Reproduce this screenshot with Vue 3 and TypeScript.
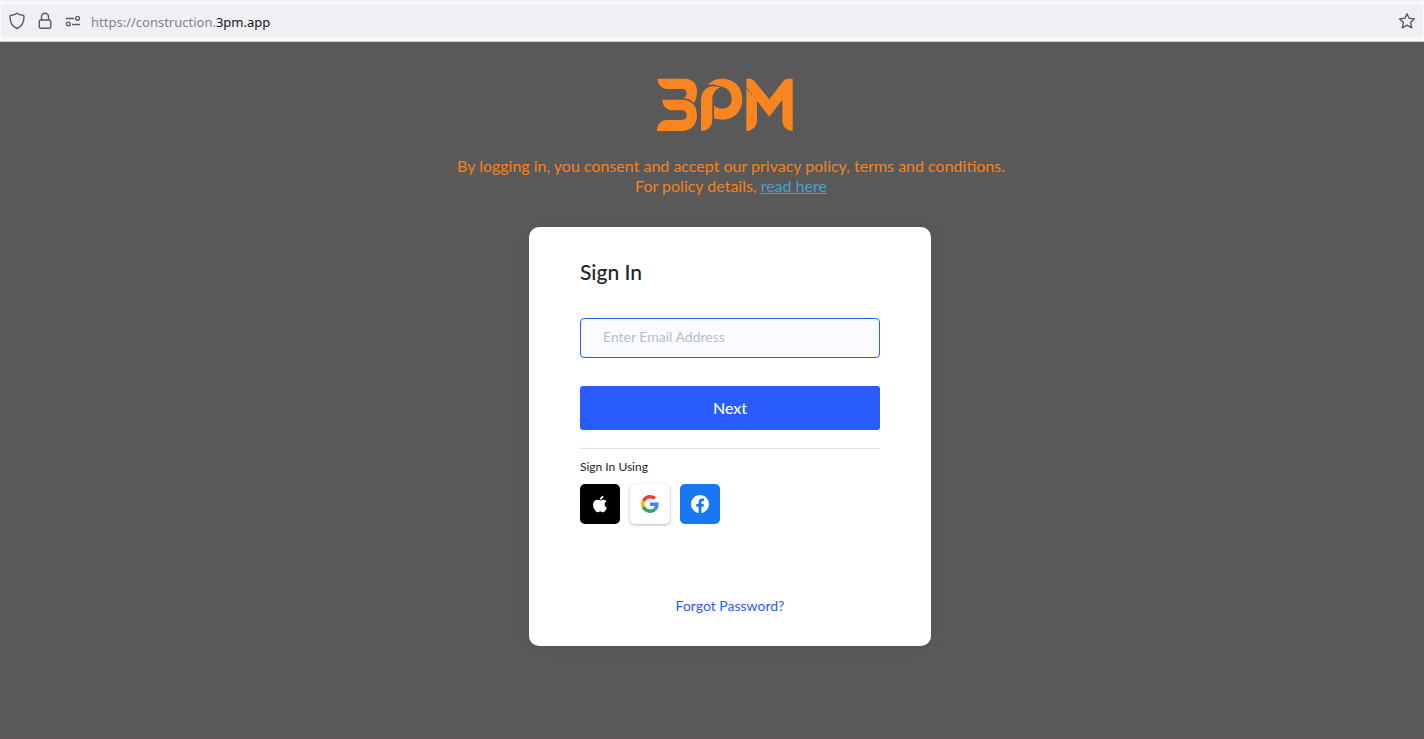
<script setup lang="ts">
import { ref } from 'vue'

const email = ref<string>('')
const address = { prefix: 'https://construction.', domain: '3pm.app' }
</script>

<template>
  <div class="window">
    <header class="toolbar">
      <div class="address-bar">
        <button class="tool" type="button" aria-label="Tracking protection">
          <svg width="16" height="18" viewBox="0 0 16 18" fill="none" stroke="#5b5b66" stroke-width="1.4" stroke-linejoin="round">
            <path d="M8 1.2 C6.8 2.2 4 3.2 1.6 3.5 C1.1 3.6 1 3.9 1 4.4 C1.1 10.4 3 14.5 8 16.5 C13 14.5 14.9 10.4 15 4.4 C15 3.9 14.9 3.6 14.4 3.5 C12 3.2 9.2 2.2 8 1.2Z" />
          </svg>
        </button>
        <button class="tool" type="button" aria-label="Connection security">
          <svg width="14" height="18" viewBox="0 0 14 18" fill="none" stroke="#5b5b66" stroke-width="1.4">
            <rect x="1.2" y="8" width="11.6" height="8.3" rx="1.6" />
            <path d="M3.5 8V4.8a3.5 3.5 0 0 1 7 0V8" />
          </svg>
        </button>
        <button class="tool" type="button" aria-label="Site permissions">
          <svg width="16" height="12" viewBox="0 0 16 12" fill="none" stroke="#5b5b66" stroke-width="1.4">
            <path d="M1 3.5H9M7 9.5H15" />
            <circle cx="12.5" cy="3.3" r="1.9" />
            <circle cx="3.3" cy="9" r="1.9" />
          </svg>
        </button>
        <span class="url"><span class="url-prefix">{{ address.prefix }}</span>{{ address.domain }}</span>
        <button class="tool" type="button" aria-label="Bookmark this page">
          <svg width="18" height="18" viewBox="0 0 18 18" fill="none" stroke="#5b5b66" stroke-width="1.4" stroke-linejoin="round">
            <path d="M9 1.7 L11.1 6.2 L16.4 6.9 L12.6 10.3 L13.7 15.9 L9 13.2 L4.3 15.9 L5.4 10.3 L1.6 6.9 L6.9 6.2Z" />
          </svg>
        </button>
      </div>
    </header>

    <main class="page">
      <svg class="logo" viewBox="36 24 408 162" role="img" aria-label="3PM">
        <path d="M38 26H118C142 26 156 40 156 62C156 79 153 91 147 99C139 90 130 86 115 85C122 82 125 77 125 70C125 61 120 57 112 57H72C52 57 38 46 38 26Z" />
        <path d="M52 89H112C139 89 156 108 156 136C156 165 138 183 110 183H36C36 162 48 150 67 150H110C120 150 125 145 125 136C125 127 120 121 110 121H85C66 121 52 109 52 89Z" />
        <path d="M168 183V92C168 60 190 41 226 52C209 60 202 72 202 91V150C202 169 190 182 168 183Z" />
        <path d="M188 45C200 32 214 26 232 26C268 26 292 52 292 88C292 126 266 149 232 149C223 149 215 148 207 145V106C213 113 221 116 231 116C248 116 260 105 260 87C260 66 246 52 225 49C212 44 201 42 188 45Z" />
        <path d="M304 55L336 91V150C336 169 323 182 304 183Z" />
        <path d="M304 26H316C321 26 325 29 328 33L373 88L415 33C419 28 423 26 429 26H443V183C424 182 412 169 412 150V89L373 140L304 51Z" />
      </svg>

      <p class="consent">
        By logging in, you consent and accept our privacy policy, terms and conditions.<br />
        For policy details, <a href="#policy">read here</a>
      </p>

      <form class="card" @submit.prevent>
        <h1>Sign In</h1>
        <input v-model="email" type="email" placeholder="Enter Email Address" aria-label="Email address" />
        <button class="next" type="submit">Next</button>
        <hr />
        <p class="using">Sign In Using</p>
        <div class="providers">
          <button class="provider apple" type="button" aria-label="Sign in with Apple">
            <svg width="22" height="22" viewBox="0 0 24 24" fill="#fff">
              <path d="M17.05 20.28c-.98.95-2.05.8-3.08.35-1.09-.46-2.09-.48-3.24 0-1.44.62-2.2.44-3.06-.35C2.79 15.25 3.51 7.59 9.05 7.31c1.35.07 2.29.74 3.08.8 1.18-.24 2.31-.93 3.57-.84 1.51.12 2.65.72 3.4 1.8-3.12 1.87-2.38 5.98.48 7.13-.57 1.5-1.31 2.99-2.54 4.09zM12.03 7.25c-.15-2.23 1.66-4.07 3.74-4.25.29 2.58-2.34 4.5-3.74 4.25z" />
            </svg>
          </button>
          <button class="provider google" type="button" aria-label="Sign in with Google">
            <svg width="18" height="18" viewBox="0 0 48 48">
              <path fill="#ea4335" d="M24 9.5c3.54 0 6.71 1.22 9.21 3.6l6.85-6.85C35.9 2.38 30.47 0 24 0 14.62 0 6.51 5.38 2.56 13.22l7.98 6.19C12.43 13.72 17.74 9.5 24 9.5z" />
              <path fill="#4285f4" d="M46.98 24.55c0-1.57-.15-3.09-.38-4.55H24v9.02h12.94c-.58 2.96-2.26 5.48-4.78 7.18l7.73 6c4.51-4.18 7.09-10.36 7.09-17.65z" />
              <path fill="#fbbc05" d="M10.53 28.59c-.48-1.45-.76-2.99-.76-4.59s.27-3.14.76-4.59l-7.98-6.19C.92 16.46 0 20.12 0 24s.92 7.54 2.56 10.78l7.97-6.19z" />
              <path fill="#34a853" d="M24 48c6.48 0 11.93-2.13 15.89-5.81l-7.73-6c-2.15 1.45-4.92 2.3-8.16 2.3-6.26 0-11.57-4.22-13.47-9.91l-7.98 6.19C6.51 42.62 14.62 48 24 48z" />
            </svg>
          </button>
          <button class="provider facebook" type="button" aria-label="Sign in with Facebook">
            <svg width="18" height="18" viewBox="0 0 24 24" fill="#fff">
              <path d="M24 12.073C24 5.405 18.627 0 12 0S0 5.405 0 12.073C0 18.1 4.388 23.094 10.125 24v-8.437H7.078v-3.49h3.047v-2.66c0-3.025 1.792-4.697 4.533-4.697 1.312 0 2.686.236 2.686.236v2.971h-1.513c-1.491 0-1.956.93-1.956 1.886v2.264h3.328l-.532 3.49h-2.796V24C19.612 23.094 24 18.1 24 12.073z" />
            </svg>
          </button>
        </div>
        <a class="forgot" href="#forgot">Forgot Password?</a>
      </form>
    </main>
  </div>
</template>

<style>
body {
  margin: 0;
  background: #595959;
}
</style>

<style scoped>
.window {
  display: flex;
  flex-direction: column;
  min-height: 100vh;
  box-sizing: border-box;
  font-family: Lato, "Noto Sans", sans-serif;
  background: #595959;
  border-bottom: 2px solid #5b575b;
}

button {
  padding: 0;
  border: 0;
  background: none;
  font: inherit;
  cursor: pointer;
}

.toolbar {
  padding: 4px 1px;
  background: #f9f9fb;
  border-top: 1px solid #f0f0f4;
  border-bottom: 1px solid #cccccc;
}

.address-bar {
  display: flex;
  align-items: center;
  height: 32px;
  padding: 0 2px;
  border-radius: 4px;
  background: #f0f0f4;
}

.tool {
  display: flex;
  align-items: center;
  justify-content: center;
  width: 28px;
  height: 28px;
}

.url {
  flex: 1;
  padding: 2px 4px 0;
  font-family: "Noto Sans", sans-serif;
  font-size: 13px;
  line-height: 20px;
  color: #15141a;
}

.url-prefix {
  color: #84838a;
}

.page {
  display: flex;
  flex: 1;
  flex-direction: column;
  align-items: center;
  padding: 36px 0 36px 36px;
}

.logo {
  width: 136px;
  height: 54px;
  margin-right: 10px;
  fill: #f98520;
}

.consent {
  margin: 24px 0 31px;
  padding-left: 2px;
  font-size: 16px;
  line-height: 20px;
  text-align: center;
  color: #f58220;
}

.consent a {
  color: #4b9fcd;
}

.card {
  display: flex;
  flex-direction: column;
  box-sizing: border-box;
  width: 402px;
  padding: 31px 51px 30px;
  border-radius: 10px;
  background: #ffffff;
  box-shadow: 0 0 20px rgba(0, 0, 0, 0.04);
}

h1 {
  margin: 0 0 32px;
  font-size: 21px;
  font-weight: 500;
  line-height: 28px;
  color: #212529;
}

input {
  box-sizing: border-box;
  width: 100%;
  height: 40px;
  padding: 0 22px 4px;
  border: 1px solid #295cfa;
  border-radius: 4px;
  outline: none;
  background: #fbfcff;
  font-family: inherit;
  font-size: 14px;
  color: #212529;
}

input::placeholder {
  color: #b9bdc9;
}

.next {
  height: 44px;
  margin-top: 28px;
  padding-bottom: 2px;
  border-radius: 3px;
  background: #295cfa;
  font-size: 16px;
  font-weight: 500;
  color: #ffffff;
}

hr {
  width: 100%;
  height: 1px;
  margin: 18px 0 10px;
  border: 0;
  background: #e2e2e2;
}

.using {
  margin: 0 0 9px;
  font-size: 12px;
  line-height: 16px;
  color: #212529;
}

.providers {
  display: flex;
  gap: 10px;
}

.provider {
  display: flex;
  align-items: center;
  justify-content: center;
  width: 40px;
  height: 40px;
  border-radius: 5px;
}

.apple {
  background: #000000;
}

.google {
  background: #ffffff;
  box-shadow: 0 1px 3px rgba(0, 0, 0, 0.3);
}

.facebook {
  background: #1877f2;
}

.forgot {
  align-self: center;
  margin-top: 72px;
  font-size: 14px;
  line-height: 20px;
  color: #295cfa;
  text-decoration: none;
}
</style>
